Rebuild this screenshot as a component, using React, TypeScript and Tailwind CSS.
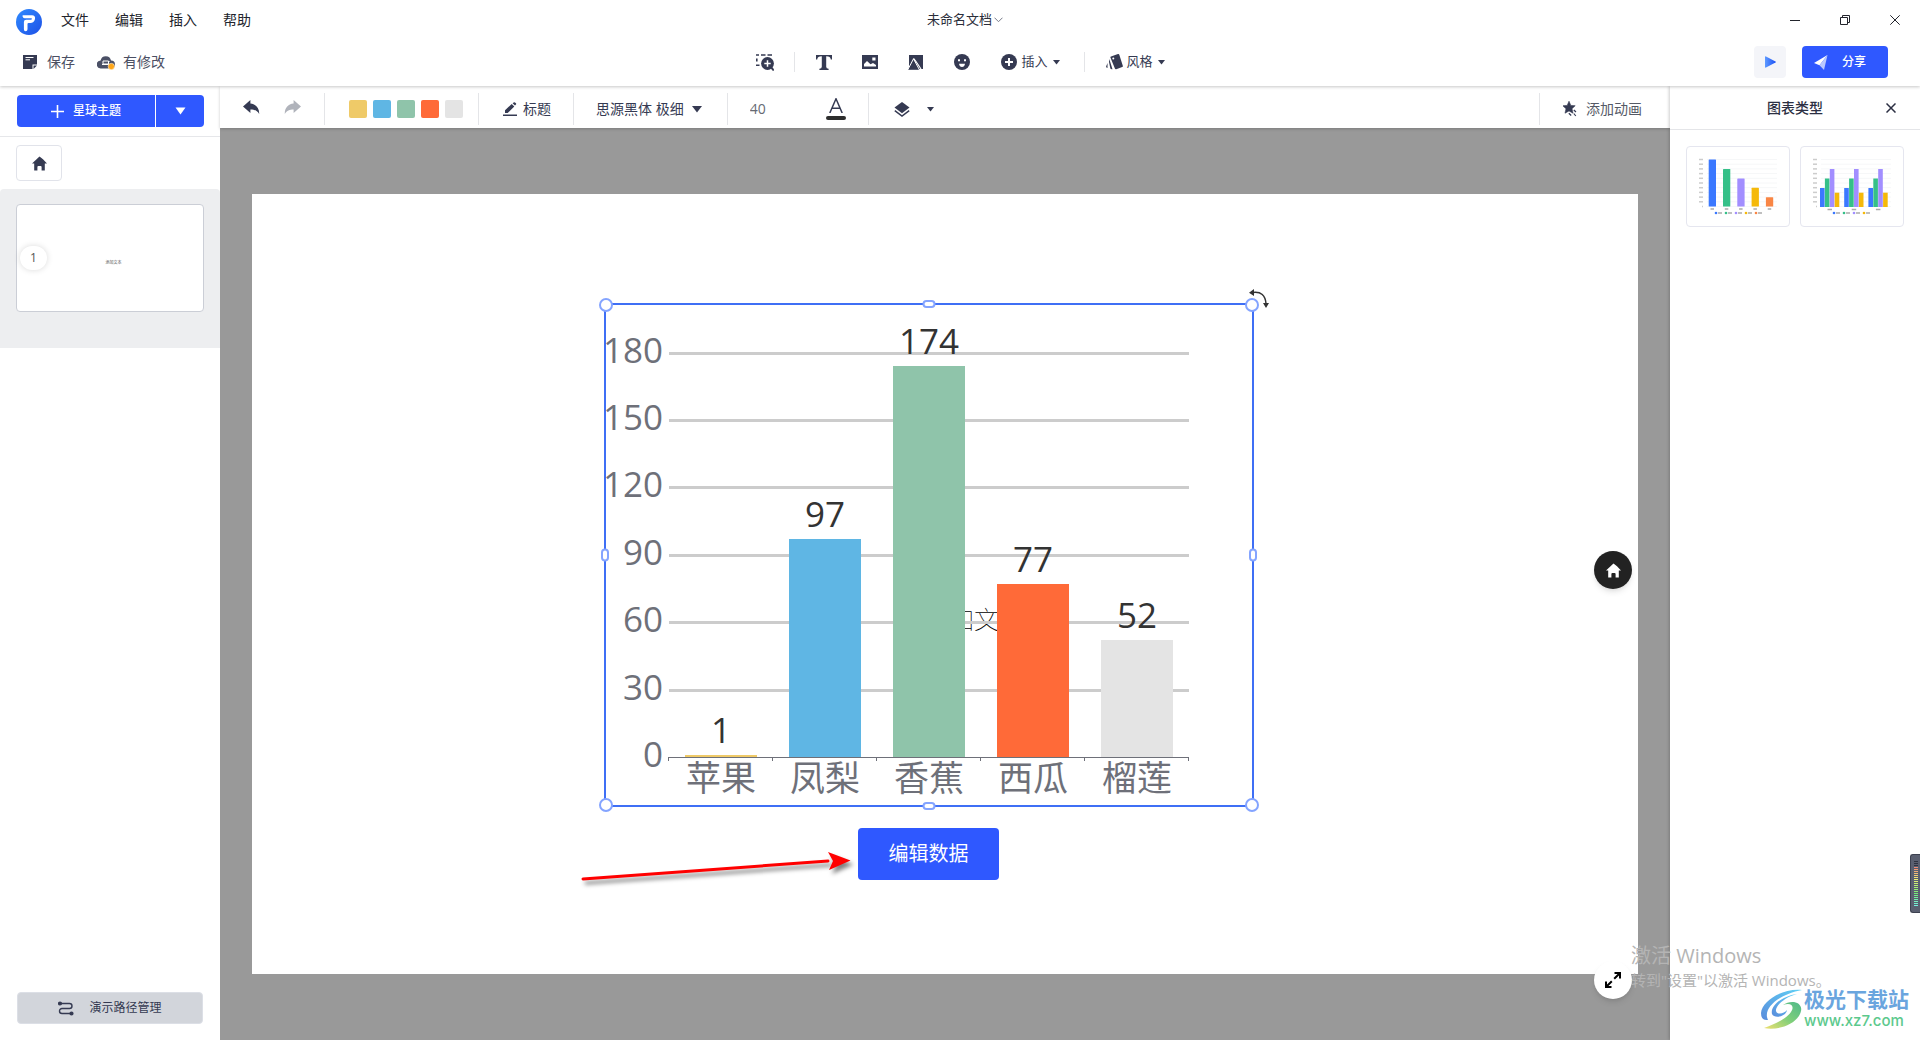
import React from "react";

const INK = "#353a52";

const bars = [
  { name: "苹果", value: 1, color: "#efca68" },
  { name: "凤梨", value: 97, color: "#5fb6e4" },
  { name: "香蕉", value: 174, color: "#8fc4aa" },
  { name: "西瓜", value: 77, color: "#ff6a38" },
  { name: "榴莲", value: 52, color: "#e4e4e4" },
];

function Logo() {
  return (
    <svg width="26" height="26" viewBox="0 0 26 26" aria-hidden="true">
      <defs>
        <linearGradient id="logo" x1="0" y1="0" x2="1" y2="1">
          <stop offset="0" stopColor="#2f8bff" />
          <stop offset="1" stopColor="#1e50e6" />
        </linearGradient>
      </defs>
      <circle cx="13" cy="13" r="13" fill="url(#logo)" />
      <path d="M7 6.200h9c2.300 0 3.500 1.600 3 3.800-.6 2.600-2.200 4-4.700 4H12.500q-1 0-1 1v5.300q0 2-2 2-1.600 0-1.600-2V13q0-2.200 2.200-2.200h4.500q1.200 0 1.400-.8t-1-.8H8.600q-1.600 0-2.100-2-.1-1 .5-1z" fill="#fff" />
    </svg>
  );
}

function Caret({ className = "" }: { className?: string }) {
  return (
    <svg className={className} width="7" height="5" viewBox="0 0 7 5" aria-hidden="true">
      <path d="M0 0h7L3.5 4.6z" fill="currentColor" />
    </svg>
  );
}

function HomeIcon() {
  return (
    <svg width="15" height="15" viewBox="0 0 15 15" fill="currentColor" aria-hidden="true">
      <path d="M7.5.4 11 3.2 15 7.6h-2.2v6.8H9.6V11q0-1-1-1H6.4q-1 0-1 1v3.4H2.2V7.6H0z" />
    </svg>
  );
}

function UndoIcon({ flip = false }: { flip?: boolean }) {
  return (
    <svg width="17" height="15" viewBox="0 0 17 15" fill="currentColor" aria-hidden="true">
      <path d={flip ? "M17 6.5 9.6 0v3.6C4 4.2.6 8 .8 14 3 10.400 5.400 9.400 9.600 9.400V13z" : "M0 6.500 7.400 0v3.600c5.600.6 9 4.400 8.800 10.400C14 10.400 11.600 9.400 7.400 9.400V13z"} />
    </svg>
  );
}

function Divider({ className }: { className: string }) {
  return <span className={`w-px shrink-0 bg-[#e4e5e8] ${className}`} />;
}

function Header() {
  return (
    <header className="relative z-20 h-[86px] bg-white shadow-[0_1px_3px_rgba(0,0,0,0.22)]">
      <div className="grid h-10 grid-cols-[1fr_auto_1fr] items-center">
        <div className="flex items-center gap-[19px] pl-4 pt-1">
          <Logo />
          <nav className="-mt-1 flex gap-[26px] text-sm text-[#22242c]">
            <button>文件</button>
            <button>编辑</button>
            <button>插入</button>
            <button>帮助</button>
          </nav>
        </div>
        <button className="flex items-center gap-[2px] pl-[10px] text-[13px] text-[#2b2e3a]">
          未命名文档
          <svg width="9" height="6" viewBox="0 0 9 6" fill="none" stroke="#777b88" aria-hidden="true">
            <path d="m.5.7 4 4 4-4" />
          </svg>
        </button>
        <div className="flex items-center justify-end gap-10 pr-5 text-[#22242c]">
          <button aria-label="最小化">
            <svg width="10" height="10" viewBox="0 0 10 10" stroke="currentColor"><path d="M0 5.500h10" /></svg>
          </button>
          <button aria-label="还原">
            <svg width="10" height="10" viewBox="0 0 10 10" fill="none" stroke="currentColor"><path d="M.5 2.500h7v7h-7zM2.500 2.500v-2h7v7h-2" /></svg>
          </button>
          <button aria-label="关闭">
            <svg width="10" height="10" viewBox="0 0 10 10" stroke="currentColor"><path d="m.3.3 9.400 9.400M9.700.3.3 9.700" /></svg>
          </button>
        </div>
      </div>
      <div className="grid h-11 grid-cols-[1fr_auto_1fr] items-center text-[#353a52]">
        <div className="flex items-center text-sm text-[#4b4f63]">
          <button className="flex items-center gap-[10px] pl-[23px]">
            <svg width="14" height="14" viewBox="0 0 14 14" aria-hidden="true">
              <path d="M0 0h14v9.500H9.500V14H0z" fill={INK} />
              <path d="M10.500 10.500H14L10.500 14z" fill={INK} />
              <path d="M2.500 2.500h8M2.500 4.800h4.500" stroke="#fff" />
            </svg>
            保存
          </button>
          <button className="flex items-center gap-2 pl-[22px]">
            <svg width="18" height="15" viewBox="0 0 18 15" aria-hidden="true">
              <path d="M4 13.500a4 4 0 0 1-.4-8A5.300 5.300 0 0 1 14 5.500a4 4 0 0 1 0 8z" fill="#4b5066" />
              <path d="M6 6h5.500v3H6zM11.500 6.500h1M5 9.500h7" fill="none" stroke="#fff" strokeWidth="1" />
              <circle cx="14.300" cy="11.500" r="3.200" fill="#ffa71a" stroke="#fff" strokeWidth=".5" />
            </svg>
            有修改
          </button>
        </div>
        <div className="flex items-center pl-px text-[13px]">
          <button aria-label="区域">
            <svg width="18" height="17" viewBox="0 0 18 17" aria-hidden="true">
              <path d="M0 1h3M5 1h4.500M11.500 1H16M.8 4.500v3M0 11.300h3.500" stroke={INK} strokeWidth="1.600" />
              <circle cx="11.500" cy="9.500" r="6.400" fill={INK} />
              <path d="m14.500 12.500 3.300 4" stroke={INK} strokeWidth="2" />
              <path d="M8.300 9.500h6.400M11.500 6.300v6.400" stroke="#fff" strokeWidth="1.500" />
            </svg>
          </button>
          <Divider className="ml-5 h-5" />
          <button className="ml-[21px]" aria-label="文本">
            <svg width="16" height="15" viewBox="0 0 16 15" fill={INK}><path d="M0 0h16v4.400h-1.200C14.500 2.200 13.300 1.200 10.200 1.200v10.600q0 2 2.400 2V15H3.400v-1.200q2.400 0 2.400-2V1.200C2.700 1.200 1.500 2.200 1.200 4.400H0z" /></svg>
          </button>
          <button className="ml-[30px]" aria-label="图片">
            <svg width="16" height="14" viewBox="0 0 16 14" aria-hidden="true">
              <path d="M0 0h16v14H0z" fill={INK} />
              <path d="M2 11.500V9l3-3 3.500 3.300L11 8l3 2v1.500z" fill="#fff" />
              <path d="M10.300 2.500h3.200v3h-3.200z" fill="#fff" />
            </svg>
          </button>
          <button className="ml-[30px]" aria-label="形状">
            <svg width="15" height="15" viewBox="0 0 15 15" aria-hidden="true">
              <path d="M1 0h14v14H1z" fill={INK} />
              <path d="M5.500 3.800-.5 15.300h12.200z" fill={INK} stroke="#fff" />
              <path d="m5.500 3.500 2.500 3L13 14" fill="none" stroke="#fff" strokeWidth="1.200" />
            </svg>
          </button>
          <button className="ml-[31px]" aria-label="表情">
            <svg width="16" height="16" viewBox="0 0 16 16" aria-hidden="true">
              <circle cx="8" cy="8" r="8" fill={INK} />
              <path d="M4 5.200h2v2H4zM10 5.200h2v2h-2zM5 9.700h6q-.6 3.300-3 3.300t-3-3.300z" fill="#fff" />
            </svg>
          </button>
          <button className="ml-[31px] flex items-center">
            <svg width="16" height="16" viewBox="0 0 16 16" aria-hidden="true">
              <circle cx="8" cy="8" r="8" fill={INK} />
              <path d="M4 8h8M8 4v8" stroke="#fff" strokeWidth="2" />
            </svg>
            <span className="ml-1 mr-[5px]">插入</span>
            <Caret />
          </button>
          <Divider className="ml-6 h-5" />
          <button className="ml-[21px] flex items-center">
            <svg width="18" height="16" viewBox="0 0 18 16" fill={INK} aria-hidden="true">
              <path d="M5 2.500 12 .1q1-.3 1.300.6l3.500 11q.3 1-.6 1.300l-6 2.200q-1 .3-1.300-.6L4.500 3.800q-.3-1 .5-1.300z" />
              <path d="m3.300 5 3.200 10.200q-2 .3-2.200-1L3 8zM1.500 9v5Q-.3 13.500.2 12.300z" />
              <circle cx="7.300" cy="4.500" r="1" fill="#fff" />
            </svg>
            <span className="ml-[3px] mr-[5px]">风格</span>
            <Caret />
          </button>
        </div>
        <div className="flex justify-end gap-4 pr-8">
          <button aria-label="播放" className="grid size-8 place-items-center rounded bg-[#f4f5f9]">
            <svg width="11" height="12" viewBox="0 0 11 12" aria-hidden="true">
              <defs>
                <linearGradient id="play"><stop stopColor="#5f9bff" /><stop offset="1" stopColor="#1c50f5" /></linearGradient>
              </defs>
              <path d="M0 1q0-1 1-.6l9.500 5q.8.6 0 1.200L1 11.600q-1 .4-1-.6z" fill="url(#play)" />
            </svg>
          </button>
          <button className="flex h-8 w-[86px] items-center gap-[14px] rounded bg-[#2f58ff] pl-3 text-xs font-medium text-white">
            <svg width="14" height="15" viewBox="0 0 14 15" aria-hidden="true">
              <path d="M13.500 0 0 8l5.500 2.300z" fill="#fff" />
              <path d="M13.500 0 5.500 10.300 10 15z" fill="#b9c9ff" />
            </svg>
            分享
          </button>
        </div>
      </div>
    </header>
  );
}

function Sidebar() {
  return (
    <aside className="flex w-[220px] shrink-0 flex-col bg-white">
      <div className="flex h-[51px] items-center border-b border-[#e6e7ea] px-4">
        <div className="ml-px flex h-8 grow overflow-hidden rounded bg-[#2f58ff] text-xs font-medium text-white">
          <button className="flex grow items-center justify-center gap-[9px]">
            <svg width="13" height="13" viewBox="0 0 13 13" stroke="#fff" strokeWidth="1.600"><path d="M0 6.500h13M6.500 0v13" /></svg>
            星球主题
          </button>
          <button aria-label="更多主题" className="grid w-[49px] place-items-center border-l border-white">
            <svg width="11" height="8" viewBox="0 0 11 8" fill="#fff"><path d="M.5.5h10L5.500 7.500z" /></svg>
          </button>
        </div>
      </div>
      <div className="px-4 py-2">
        <button aria-label="主页" className="grid h-9 w-[46px] place-items-center rounded border border-[#e1e3ea] text-[#353a52]">
          <HomeIcon />
        </button>
      </div>
      <div className="h-[159px] rounded-t bg-[#edeef0] px-4 pt-[15px]">
        <div className="relative flex h-[108px] items-center justify-center rounded border border-[#cbced6] bg-white">
          <span className="ml-[7px] mt-[10px] text-[4px] text-[#555]">添加文本</span>
          <span className="absolute left-[3px] top-[41px] grid h-6 w-[27px] place-items-center rounded-full bg-white text-xs text-[#555] shadow-[0_0_6px_rgba(0,0,0,0.15)]">1</span>
        </div>
      </div>
      <div className="mt-auto px-4 pb-4">
        <button className="ml-px flex h-8 w-[186px] items-center justify-center gap-[15px] rounded border border-[#dcdfe6] bg-[#d2d5db] text-xs text-[#353a52]">
          <svg width="16" height="15" viewBox="0 0 16 15" fill="none" stroke={INK} strokeWidth="1.400" aria-hidden="true">
            <path d="M3 2.500h8.500a2.500 2.500 0 0 1 0 5H4a2.500 2.500 0 0 0 0 5h9" />
            <circle cx="2" cy="2.500" r="1.400" fill={INK} />
            <circle cx="13.500" cy="12.500" r="1.400" fill={INK} />
          </svg>
          演示路径管理
        </button>
      </div>
    </aside>
  );
}

function Toolbar() {
  return (
    <div className="relative z-10 flex h-[42px] items-center bg-white pt-1 text-sm text-[#353a52] shadow-[0_1px_3px_rgba(0,0,0,0.2)]">
      <div className="ml-[23px] flex gap-6 pb-1">
        <button aria-label="撤销"><UndoIcon /></button>
        <button aria-label="重做" className="text-[#b0b3bb]"><UndoIcon flip /></button>
      </div>
      <Divider className="ml-[23px] h-8" />
      <div className="ml-6 flex gap-[6px]">
        <button aria-label="黄色" className="size-[18px] rounded-[2px] bg-[#efca68]" />
        <button aria-label="蓝色" className="size-[18px] rounded-[2px] bg-[#5fb6e4]" />
        <button aria-label="绿色" className="size-[18px] rounded-[2px] bg-[#8fc4aa]" />
        <button aria-label="橙色" className="size-[18px] rounded-[2px] bg-[#ff6a38]" />
        <button aria-label="灰色" className="size-[18px] rounded-[2px] bg-[#e4e4e4]" />
      </div>
      <Divider className="ml-[15px] h-8" />
      <button className="ml-6 flex items-center gap-[6px]">
        <svg width="14" height="14" viewBox="0 0 14 14" fill={INK} aria-hidden="true">
          <path d="M2 11V8.300L8.700 2 11.300 4.600 4.700 11zM9.600 1.300 10.700.4q.7-.5 1.300 0l.9.9q.6.700 0 1.300l-.9 1z" />
          <path d="M0 12.500h14V14H0z" />
        </svg>
        标题
      </button>
      <Divider className="ml-[22px] h-8" />
      <button className="ml-[22px] flex items-center gap-2">
        思源黑体 极细
        <svg width="10" height="7" viewBox="0 0 10 7" fill={INK}><path d="M0 0h10L5 6.500z" /></svg>
      </button>
      <Divider className="ml-[25px] h-8" />
      <input aria-label="字号" defaultValue="40" className="ml-[22px] w-[60px] text-sm text-[#666a73] outline-none" />
      <button aria-label="文字颜色" className="ml-4 flex w-5 flex-col items-center">
        <svg width="14" height="15" viewBox="0 0 14 15" fill="none" stroke={INK} strokeWidth="1.500" aria-hidden="true">
          <path d="M.8 15 7 .8 13.200 15M3 10.200h8" />
        </svg>
        <span className="mt-[3px] h-1 w-5 rounded-full bg-[#2d2d2d]" />
      </button>
      <Divider className="ml-[22px] h-8" />
      <button aria-label="图层" className="ml-[25px] flex items-center gap-[17px]">
        <svg width="16" height="15" viewBox="0 0 16 15" aria-hidden="true">
          <path d="M8 0l7.500 5.600L8 11.200.5 5.600z" fill={INK} />
          <path d="M.8 8.700 8 14l7.200-5.300" fill="none" stroke={INK} strokeWidth="1.500" />
        </svg>
        <Caret />
      </button>
      <div className="ml-auto flex items-center">
        <Divider className="h-8" />
        <button className="ml-[23px] mr-7 flex items-center gap-[9px] text-[#555a66]">
          <svg width="14" height="16" viewBox="0 0 14 16" fill={INK} aria-hidden="true">
            <path d="m6 .2 1.800 4.200 4.400.3-3.200 3 1 4.500L6 9.900l-4 2.300 1-4.500-3.200-3 4.400-.3z" stroke={INK} strokeWidth=".6" strokeLinejoin="round" />
            <path d="m10.800 9 2.200 2M10.800 12.500l2 2.500M5.800 12.200l2.400 2.300" stroke={INK} strokeWidth="1.200" />
          </svg>
          添加动画
        </button>
      </div>
    </div>
  );
}

function Chart() {
  const base = 454;
  const unit = 67.4 / 30;
  return (
    <svg className="block overflow-visible" width="646" height="500" viewBox="2 2 646 500" fontSize="35" role="img" aria-label="水果数据柱状图">
      {[0, 30, 60, 90, 120, 150, 180].map((v) => (
        <g key={v}>
          {v > 0 && <path d={`M65 ${Math.round(base - v * unit)}.500H585`} stroke="#cccccc" strokeWidth="3" />}
          <text x="59" y={Math.round(base - v * unit) + 10} textAnchor="end" fill="#6e7079">{v}</text>
        </g>
      ))}
      {bars.map((b, i) => {
        const h = Math.round(b.value * unit);
        const cx = 117 + Math.round(i * 104);
        return (
          <g key={b.name}>
            <rect x={cx - 36} y={base - h} width="72" height={h} fill={b.color} />
            <text x={cx} y={base - h - 12} textAnchor="middle" fill="#333">{b.value}</text>
            <text x={cx} y={base + 34} textAnchor="middle" fill="#6e7079">{b.name}</text>
          </g>
        );
      })}
      <path d="M64 454.500h521M64.500 454v4M168.500 454v4M272.500 454v4M376.500 454v4M480.500 454v4M584.500 454v4" stroke="#6e7079" fill="none" />
    </svg>
  );
}

function Selection() {
  const corner = "absolute size-[14px] rounded-full border-2 border-[#84a4ff] bg-white";
  const flat = "absolute left-1/2 h-2 w-[13px] -translate-x-1/2 rounded-full border-2 border-[#84a4ff] bg-white";
  const tall = "absolute top-1/2 h-[13px] w-2 -translate-y-1/2 rounded-full border-2 border-[#84a4ff] bg-white";
  return (
    <div className="absolute left-[352px] top-[109px] border-2 border-[#3f6ff5]">
      <Chart />
      <span className={`${corner} -left-[7px] -top-[7px]`} />
      <span className={`${corner} -right-[7px] -top-[7px]`} />
      <span className={`${corner} -bottom-[7px] -left-[7px]`} />
      <span className={`${corner} -bottom-[7px] -right-[7px]`} />
      <span className={`${flat} -top-[5px]`} />
      <span className={`${flat} -bottom-[5px]`} />
      <span className={`${tall} -left-[5px]`} />
      <span className={`${tall} -right-[5px]`} />
      <svg className="absolute -right-[18px] -top-[17px]" width="21" height="21" viewBox="0 0 21 21" aria-hidden="true">
        <path d="M4 4.500q12-1.500 13 11" fill="none" stroke="#333" strokeWidth="1.500" />
        <path d="M0 4.800 5 1v7zM14 15h6l-3 5z" fill="#333" />
      </svg>
    </div>
  );
}

function Workspace() {
  return (
    <main className="relative flex grow items-center bg-[#999999] px-8">
      <div className="relative aspect-[16/9] w-full bg-white">
        <p className="absolute left-[672px] top-[407px] text-[25px] font-thin text-black">添加文本</p>
        <Selection />
        <button className="absolute left-[606px] top-[634px] h-[52px] w-[141px] rounded bg-[#2f58ff] text-xl text-white">编辑数据</button>
        <svg className="absolute left-[326px] top-[649px] drop-shadow-[3px_4px_2px_rgba(0,0,0,0.5)]" width="280" height="44" viewBox="0 0 280 44" aria-hidden="true">
          <path d="m5 36 245-18" stroke="#f00" strokeWidth="3" strokeLinecap="round" />
          <path d="m250 9 22.500 8.500L251 27l4-9z" fill="#f00" />
        </svg>
      </div>
      <button aria-label="回到主页" className="absolute right-[38px] top-[423px] grid size-[38px] place-items-center rounded-full bg-[#222] text-white shadow-md">
        <HomeIcon />
      </button>
      <button aria-label="全屏" className="absolute bottom-[41px] right-[38px] grid size-[38px] place-items-center rounded-full bg-white shadow-md">
        <svg width="16" height="16" viewBox="0 0 16 16" aria-hidden="true">
          <path d="M9.200 6.800 14 2M2 14l4.800-4.800" stroke="#000" strokeWidth="2" />
          <path d="M9.500 1H15v5.500M1 9.500V15h5.500" fill="none" stroke="#000" strokeWidth="2" />
        </svg>
      </button>
    </main>
  );
}

const palette = ["#3b78ff", "#35c088", "#a28eff", "#f5b90a", "#f98645"];

function MiniLegend({ x, count }: { x: number; count: number }) {
  return (
    <g>
      {palette.slice(0, count).map((c, i) => (
        <g key={c}>
          <circle cx={x + i * 10} cy="66" r="1.300" fill={c} />
          <path d={`M${x + 2 + i * 10} 66h4`} stroke="#aaa" strokeWidth="1.500" />
        </g>
      ))}
    </g>
  );
}

function MiniGrid() {
  return (
    <g>
      {[0, 1, 2, 3, 4, 5, 6, 7, 8, 9, 10].map((i) => (
        <g key={i}>
          <path d={`M20 ${12.500 + i * 4.700}H90`} stroke="#f6f7f8" />
          <path d={`M${i === 10 ? 15 : 12} ${12.500 + i * 4.700}h${i === 10 ? 1 : 4}`} stroke="#ccc" strokeWidth="1.500" />
        </g>
      ))}
    </g>
  );
}

function ChartPanel() {
  const card = "grow rounded border border-[#e5e6ef]";
  return (
    <aside className="z-10 flex w-[250px] shrink-0 flex-col bg-white shadow-[-1px_0_3px_rgba(0,0,0,0.2)]">
      <div className="relative flex h-[44px] items-center justify-center border-b border-[#e4e5e8] text-sm font-medium text-[#2b2f42]">
        <h2>图表类型</h2>
        <button aria-label="关闭面板" className="absolute right-6">
          <svg width="10" height="10" viewBox="0 0 10 10" stroke="currentColor" strokeWidth="1.500"><path d="m.5.5 9 9M9.500.5l-9 9" /></svg>
        </button>
      </div>
      <div className="flex gap-[10px] p-4">
        <button aria-label="基础柱状图" className={card}>
          <svg width="102" height="79" viewBox="0 0 102 79">
            <MiniGrid />
            {[47, 37.500, 28, 18.700, 9.300].map((h, i) => (
              <g key={i}>
                <rect x={21.700 + i * 14.300} y={59.500 - h} width="7.300" height={h} rx=".5" fill={palette[i]} />
                <path d={`M${23.500 + i * 14.300} 62h3.500`} stroke="#aaa" strokeWidth="1.500" />
              </g>
            ))}
            <MiniLegend x={29} count={5} />
          </svg>
        </button>
        <button aria-label="分组柱状图" className={card}>
          <svg width="102" height="79" viewBox="0 0 102 79">
            <MiniGrid />
            {[0, 1, 2].map((g) => (
              <g key={g}>
                {[19, 28.500, 38, 14.300].map((h, i) => (
                  <rect key={i} x={19 + g * 24.200 + i * 4.900} y={60 - h} width="4.600" height={h} fill={palette[i]} />
                ))}
                <path d={`M${26.500 + g * 24.200} 62.500h4.500`} stroke="#aaa" strokeWidth="1.500" />
              </g>
            ))}
            <MiniLegend x={33} count={4} />
          </svg>
        </button>
      </div>
    </aside>
  );
}

function Watermarks() {
  return (
    <>
      <div className="pointer-events-none absolute bottom-[50px] right-[88px] z-30 w-[201px] text-[#b4b4b4]">
        <p className="text-xl leading-7">激活 Windows</p>
        <p className="whitespace-nowrap text-[15px] leading-5">转到"设置"以激活 Windows。</p>
      </div>
      <div className="pointer-events-none absolute bottom-[9px] right-[11px] z-30 flex items-center gap-[2px]">
        <svg width="42" height="42" viewBox="0 0 42 42" aria-hidden="true">
          <defs>
            <linearGradient id="swirl-a" x1="1" y1="0" x2="0" y2="1"><stop stopColor="#5fd0f5" /><stop offset="1" stopColor="#5a8cdc" /></linearGradient>
            <linearGradient id="swirl-b" x1="1" y1="0" x2="0" y2="1"><stop stopColor="#4fb98a" /><stop offset=".5" stopColor="#7fcf7a" /><stop offset="1" stopColor="#f0e070" /></linearGradient>
          </defs>
          <path d="M42 2C22 0 2 13 1 25q0 8 7 7C2 20 20 6 42 2z" fill="url(#swirl-a)" />
          <path d="M37 6C22 8 10 18 12 26c2 5 14 3 15-4-3 4-10 5-11 1C15 18 25 9 37 6z" fill="url(#swirl-a)" />
          <path d="M23 17c8-3 12 1 8 7C25 32 14 36 4 40c14 3 34-4 37-17 2-9-10-12-18-6z" fill="url(#swirl-b)" />
        </svg>
        <div>
          <p className="text-[21px] font-bold leading-6 text-[#6aa5de]">极光下载站</p>
          <p className="text-[15px] font-medium leading-5 text-[#5cc98d] [font-family:Inter,sans-serif]">www.xz7.com</p>
        </div>
      </div>
      <div className="absolute right-0 top-[854px] z-30 h-[59px] w-[10px] rounded-l-[3px] border border-r-0 border-[#3d4150] bg-[#5a5f70]">
        <svg className="ml-[3px] mt-[6px]" width="4" height="46" viewBox="0 0 4 46" aria-hidden="true">
          {Array.from({ length: 23 }, (_, i) => (
            <rect key={i} y={i * 2} width="4" height="1" fill={i < 3 ? "#2f3240" : `hsl(${Math.round((i - 3) * 8.500 + 10)} 80% 70%)`} />
          ))}
        </svg>
      </div>
    </>
  );
}

export default function App() {
  return (
    <div className="relative flex min-h-screen flex-col overflow-hidden bg-white font-['Open_Sans','Noto_Sans_CJK_SC',sans-serif] [&_button]:cursor-pointer">
      <Header />
      <div className="flex grow">
        <Sidebar />
        <div className="flex min-w-0 grow flex-col">
          <Toolbar />
          <Workspace />
        </div>
        <ChartPanel />
      </div>
      <Watermarks />
    </div>
  );
}
